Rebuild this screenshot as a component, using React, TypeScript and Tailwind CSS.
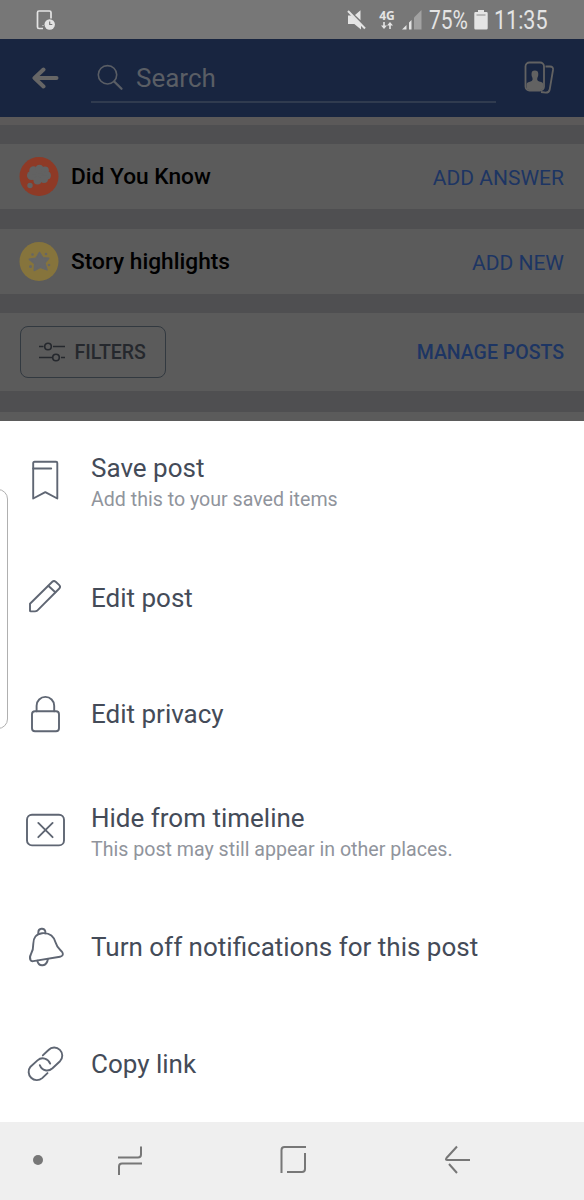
import React from "react";

interface MenuItem {
  title: string;
  subtitle?: string;
  icon: React.ReactNode;
}

interface SectionProps {
  title: string;
  action: string;
  badge: React.ReactNode;
}

const menuItems: MenuItem[] = [
  {
    title: "Save post",
    subtitle: "Add this to your saved items",
    icon: (
      <>
        <path d="M10.5 1.800h21.500q1.300 0 1.300 1.300V38.500l-12-6.300L9.200 38.500V3.100q0-1.300 1.300-1.300Z" />
        <path d="M9.200 8.500h18" />
      </>
    ),
  },
  {
    title: "Edit post",
    icon: (
      <>
        <path d="M6 34.800v-7L28.300 5.800q1.700-1.700 3.400 0l3.600 3.300q1.700 1.700 0 3.400L13 34.800q-.8.6-2 .6H6.800q-.8 0-.8-.6Z" />
        <path d="m24.300 9.800 7 6.500" />
      </>
    ),
  },
  {
    title: "Edit privacy",
    icon: (
      <>
        <rect x="8" y="18.300" width="27" height="20" rx="3" />
        <path d="M12.600 18.300v-5.600a8.800 8.800 0 0 1 17.600 0v5.600" />
      </>
    ),
  },
  {
    title: "Hide from timeline",
    subtitle: "This post may still appear in other places.",
    icon: (
      <>
        <rect x="3" y="5.700" width="37" height="30.700" rx="5" />
        <path d="m14.300 13.900 14.300 14.300m0-14.300L14.300 28.200" />
      </>
    ),
  },
  {
    title: "Turn off notifications for this post",
    icon: (
      <>
        <path d="M18 7.200c-5.800.6-8.800 5-8.700 10.500.1 5.500-.9 7.800-2.300 10.300-1.300 2.500-1.500 4.500-.4 6.300.5.9 1.500 1 2.700.8l26.700-4.400c2.700-.5 3.500-2.200 2.400-4.300-1.500-2.700-5-3.500-6.700-9.700C30 10.500 26 6.500 18 7.200Z" />
        <path d="M14.300 8V6.200a3.600 3.600 0 0 1 7-1v2.200M13.300 34.800c1.500 6.500 9.500 6 10.600-1.800" />
      </>
    ),
  },
  {
    title: "Copy link",
    icon: (
      <>
        <path d="M18.800 13.400 24.500 8a8 8 0 0 1 11.500 11.200L28.500 26.200c-4.500 4-10.500 2.500-12.700-3" />
        <path d="m23.500 31.100-5.300 5A8.200 8.200 0 0 1 6.500 24.700l7-6.300c4.500-4 10.500-1.800 12.700 3.200" />
      </>
    ),
  },
];

function StatusBar() {
  return (
    <div className="flex h-[39px] shrink-0 items-center bg-[#777777] text-[#e4e4e4]">
      <svg className="ml-[36px]" width="20" height="20" fill="none">
        <path d="M7 18.500H3q-1.500 0-1.500-1.500V2.500Q1.500 1 3 1h10.500Q15 1 15 2.500v6" stroke="currentColor" strokeWidth="1.700" />
        <circle cx="13.700" cy="14.500" r="5.200" fill="currentColor" />
        <path d="M13.700 11.500v3h2.600" stroke="#777777" strokeWidth="1.200" />
        <path d="M6.500 15.500h1" stroke="currentColor" />
      </svg>
      <svg className="ml-[291px]" width="19" height="20" fill="currentColor">
        <path d="M1 5.500h3.500l9.500 9.500v4.500L7.300 14H1ZM8 5l5.500-4.700v10Z" />
        <path d="m1 1 17 17.500" stroke="currentColor" strokeWidth="2" />
      </svg>
      <div className="ml-[13px] flex w-4 flex-col items-center">
        <span className="font-['Open_Sans'] text-[12px] leading-[12px] font-bold">4G</span>
        <svg width="12" height="7" fill="currentColor">
          <path d="M2.200 0h1.600v3.500H6L3 7 0 3.500h2.200ZM8.200 7h1.600V3.500H12L9 0 6 3.500h2.200Z" />
        </svg>
      </div>
      <svg className="ml-[7px]" width="20" height="20" fill="currentColor">
        <path d="M0 19.500 4.500 15v4.500ZM7 12.500l2.500-2.500v9.500H7Z" />
        <path d="M12 7.500 19.500 0v19.500H12Z" opacity=".4" />
      </svg>
      <span className="mt-0.5 ml-[7px] w-[38px] origin-left scale-x-[.84] text-[25px] leading-none whitespace-nowrap">75%</span>
      <svg className="ml-[7px]" width="14" height="20" fill="currentColor">
        <path d="M4 0h6v2h2.500q1.200 0 1.200 1.200v15q0 1.300-1.300 1.300H1.500Q.3 19.500.3 18.200v-15Q.3 2 1.500 2H4Z" />
        <path d="M2.500 5h9" stroke="#aaaaaa" strokeWidth="1.500" />
      </svg>
      <span className="mt-0.5 ml-[6px] origin-left scale-x-[.86] text-[25px] leading-none">11:35</span>
    </div>
  );
}

function SearchHeader() {
  return (
    <div className="flex h-[78px] shrink-0 items-center bg-[#182540] text-[#5a5e65]">
      <svg className="ml-8" width="28" height="24" fill="none" stroke="#666666" strokeWidth="4" strokeLinecap="round" strokeLinejoin="round">
        <path d="M24.500 12H3M11.500 3.500 2.500 12l9 8.500" />
      </svg>
      <div className="ml-[31px] flex h-[50px] w-[405px] items-center border-b-2 border-[#303b4f]">
        <svg className="mt-0.5 ml-1.5" width="28" height="28" fill="none" stroke="currentColor">
          <circle cx="10.500" cy="10.800" r="9.200" strokeWidth="1.600" />
          <path d="m17.200 17.500 7.300 7.300" strokeWidth="2.300" strokeLinecap="round" />
        </svg>
        <span className="mt-0.5 ml-[11px] text-[26px] leading-none">Search</span>
      </div>
      <svg className="ml-[28px]" width="32" height="34" fill="none" stroke="#626262" strokeWidth="1.800">
        <rect x="1.500" y="1.500" width="18.500" height="28" rx="4" />
        <path d="M21.500 5.500h4.500q3.500 0 3 3.500l-3.300 19.500q-.6 3.200-4 3.200L17 31" />
        <path d="M2.500 23.500C2.500 21.500 4.500 21 6.500 20.500q3-.8 1.800-4-.8-1-.8-3.500a3.400 3.400 0 0 1 6.800 0q0 2.500-.8 3.500-1.200 3.200 1.800 4 4 .7 4 3V26q0 3-3 3H5.500q-3 0-3-3Z" fill="#626262" stroke="none" />
      </svg>
    </div>
  );
}

function Section({ title, action, badge }: SectionProps) {
  return (
    <div className="flex h-[65px] shrink-0 items-center bg-[#5b5b5b] pr-5 pl-[19px]">
      <svg width="40" height="39" viewBox="-.5 0 40 39">{badge}</svg>
      <span className="mt-0.5 ml-[12px] text-[22.700px] font-medium text-black">{title}</span>
      <span className="mt-1 ml-auto text-[21px] text-[#1d3563]">{action}</span>
    </div>
  );
}

function Profile() {
  return (
    <div className="flex h-[304px] shrink-0 flex-col bg-[#4f4f51]">
      <div className="h-2 shrink-0 bg-[#5b5959]" />
      <div className="mt-[19px] flex flex-col gap-5">
        <Section
          title="Did You Know"
          action="ADD ANSWER"
          badge={
            <>
              <circle cx="19.500" cy="19.500" r="19.500" fill="#8e3a26" />
              <g fill="#626262">
                <rect x="12" y="11" width="15" height="13" rx="5" />
                <circle cx="12" cy="18.500" r="4.500" />
                <circle cx="14" cy="13.500" r="4.200" />
                <circle cx="20" cy="12" r="4.200" />
                <circle cx="25.500" cy="13.500" r="3.900" />
                <circle cx="27.500" cy="18.500" r="3.900" />
                <circle cx="24.500" cy="22" r="4" />
                <circle cx="18" cy="23.500" r="4" />
                <circle cx="10.500" cy="28.500" r="2.700" />
              </g>
            </>
          }
        />
        <Section
          title="Story highlights"
          action="ADD NEW"
          badge={
            <>
              <circle cx="19.500" cy="19.500" r="19.500" fill="#86743c" />
              <path d="m20 10.500 3.300 5.200 6 .6-4 4.700 2.200 6.800-6.800-2.500-6 3.200.5-6.800-5.400-4.400 6.700-1.100Z" fill="#666666" stroke="#666666" strokeWidth="1.500" strokeLinejoin="round" />
              <g fill="#666666">
                <circle cx="13" cy="12.500" r="1.300" />
                <circle cx="26.500" cy="12" r="1.300" />
                <circle cx="11" cy="24.500" r="1.500" />
                <circle cx="29.500" cy="23" r="1.300" />
              </g>
            </>
          }
        />
      </div>
      <div className="mt-[19px] flex h-[78px] shrink-0 items-center bg-[#5b5b5b] pr-5 pl-[19.500px]">
        <div className="flex h-[52px] w-[146px] items-center rounded-lg border border-[#323940]">
          <svg className="ml-[18px]" width="26" height="20" fill="none" stroke="#25282d" strokeWidth="1.600">
            <circle cx="9" cy="4.500" r="3.300" />
            <circle cx="17" cy="15.500" r="3.300" />
            <path d="M0 4.500h4.500m9.500 0H26M0 15.500h13m9 0h4" />
          </svg>
          <span className="mt-px ml-[10px] text-[19.500px] font-medium text-[#25282d]">FILTERS</span>
        </div>
        <span className="mt-px ml-auto text-[19.500px] font-medium text-[#1d3563]">MANAGE POSTS</span>
      </div>
      <div className="mt-[21px] h-[9px] shrink-0 bg-[#5b5b5b]" />
    </div>
  );
}

function MenuRow({ title, subtitle, icon }: MenuItem) {
  return (
    <div className="flex h-[116.500px] shrink-0 items-center pl-6">
      <svg width="43" height="43" viewBox="0 0 43 43" fill="none" stroke="#5f6673" strokeWidth="1.900" strokeLinecap="round" strokeLinejoin="round">
        {icon}
      </svg>
      <div className={`ml-6 flex flex-col ${subtitle ? "pt-[5px]" : ""}`}>
        <span className="text-[26px] leading-[32px] text-[#444b58]">{title}</span>
        {subtitle && <span className="text-[19.600px] leading-[31px] text-[#90949c]">{subtitle}</span>}
      </div>
    </div>
  );
}

function NavBar() {
  return (
    <div className="flex h-[78px] shrink-0 items-center bg-[#efefef] pb-0.5">
      <div className="ml-[33px] size-2.5 rounded-full bg-[#777777]" />
      <svg className="ml-[74px]" width="26" height="30" fill="none" stroke="#777777" strokeWidth="2">
        <path d="M1 12.500h20q3 0 3-3V1.500M25 18.500H5q-3 0-3 3V30" />
      </svg>
      <svg className="ml-[137px]" width="26" height="28" fill="none" stroke="#777777" strokeWidth="2">
        <path d="M1.500 27V4q0-3 3-3H26M25 7v16q0 3-3 3H7" />
      </svg>
      <svg className="ml-[138px]" width="27" height="30" fill="none" stroke="#777777" strokeWidth="2">
        <path d="M13 1.500 2.500 13q-1.500 2 1 2H26M5 19l8 9" />
      </svg>
    </div>
  );
}

export default function App() {
  return (
    <div className="relative flex h-[1200px] w-[584px] flex-col overflow-hidden bg-white font-[Roboto,sans-serif]">
      <StatusBar />
      <SearchHeader />
      <Profile />
      <div className="flex h-[701px] shrink-0 flex-col pt-[2px]">
        {menuItems.map((item) => (
          <MenuRow key={item.title} {...item} />
        ))}
      </div>
      <NavBar />
      {/* Edge panel handle */}
      <div className="absolute top-[489px] -left-3 h-[240px] w-5 rounded-[10px] border border-[#b0b0b0]" />
    </div>
  );
}
